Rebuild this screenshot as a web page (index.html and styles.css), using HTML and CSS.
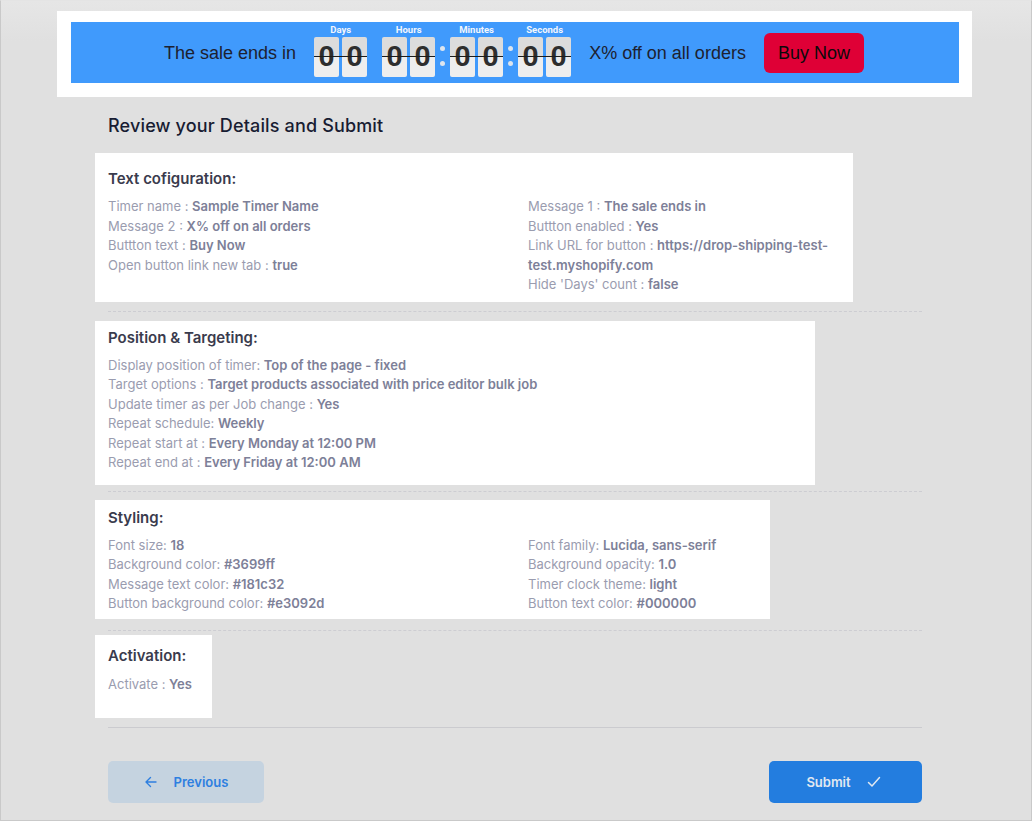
FILE: index.html
```html
<!DOCTYPE html>
<html lang="en">
<head>
<meta charset="utf-8">
<title>Review your Details and Submit</title>
<link rel="stylesheet" href="styles.css">
</head>
<body>
<div class="frame">
  <div class="banner">
    <div class="bar">
      <span class="bar-text">The sale ends in</span>
      <div class="timer">
        <div class="unit">
          <span class="unit-label">Days</span>
          <div class="digits"><span class="digit">0</span><span class="digit">0</span></div>
        </div>
        <span class="sep"></span>
        <div class="unit">
          <span class="unit-label">Hours</span>
          <div class="digits"><span class="digit">0</span><span class="digit">0</span></div>
        </div>
        <span class="sep colon"><i></i><i></i></span>
        <div class="unit">
          <span class="unit-label">Minutes</span>
          <div class="digits"><span class="digit">0</span><span class="digit">0</span></div>
        </div>
        <span class="sep colon"><i></i><i></i></span>
        <div class="unit">
          <span class="unit-label">Seconds</span>
          <div class="digits"><span class="digit">0</span><span class="digit">0</span></div>
        </div>
      </div>
      <span class="bar-text">X% off on all orders</span>
      <a class="buy" href="#">Buy Now</a>
    </div>
  </div>

  <main class="review">
    <h1 class="review-title">Review your Details and Submit</h1>

    <section class="card card-text">
      <h2 class="card-title">Text cofiguration:</h2>
      <div class="cols">
        <div class="col">
          <p>Timer name : <b>Sample Timer Name</b></p>
          <p>Message 2 : <b>X% off on all orders</b></p>
          <p>Buttton text : <b>Buy Now</b></p>
          <p>Open button link new tab : <b>true</b></p>
        </div>
        <div class="col">
          <p>Message 1 : <b>The sale ends in</b></p>
          <p>Buttton enabled : <b>Yes</b></p>
          <p>Link URL for button : <b>https://drop-shipping-test-test.myshopify.com</b></p>
          <p>Hide 'Days' count : <b>false</b></p>
        </div>
      </div>
    </section>
    <hr class="dash dash-first">

    <section class="card card-position">
      <h2 class="card-title">Position &amp; Targeting:</h2>
      <div class="col">
        <p>Display position of timer: <b>Top of the page - fixed</b></p>
        <p>Target options : <b>Target products associated with price editor bulk job</b></p>
        <p>Update timer as per Job change : <b>Yes</b></p>
        <p>Repeat schedule: <b>Weekly</b></p>
        <p>Repeat start at : <b>Every Monday at 12:00 PM</b></p>
        <p>Repeat end at : <b>Every Friday at 12:00 AM</b></p>
      </div>
    </section>
    <hr class="dash dash-second">

    <section class="card card-styling">
      <h2 class="card-title">Styling:</h2>
      <div class="cols">
        <div class="col">
          <p>Font size: <b>18</b></p>
          <p>Background color: <b>#3699ff</b></p>
          <p>Message text color: <b>#181c32</b></p>
          <p>Button background color: <b>#e3092d</b></p>
        </div>
        <div class="col">
          <p>Font family: <b>Lucida, sans-serif</b></p>
          <p>Background opacity: <b>1.0</b></p>
          <p>Timer clock theme: <b>light</b></p>
          <p>Button text color: <b>#000000</b></p>
        </div>
      </div>
    </section>
    <hr class="dash dash-last">

    <section class="card card-activation">
      <h2 class="card-title">Activation:</h2>
      <div class="col">
        <p>Activate : <b>Yes</b></p>
      </div>
    </section>
    <hr class="rule">

    <div class="actions">
      <button class="btn btn-prev" type="button">
        <svg width="14" height="14" viewBox="0 0 14 14" fill="none" stroke="currentColor" stroke-width="1.4" stroke-linecap="round" stroke-linejoin="round"><path d="M12 7H2.5M6.5 2.5 2 7l4.5 4.5"/></svg>
        <span>Previous</span>
      </button>
      <button class="btn btn-submit" type="button">
        <span>Submit</span>
        <svg width="14" height="12" viewBox="0 0 14 12" fill="none" stroke="currentColor" stroke-width="1.5" stroke-linecap="round" stroke-linejoin="round"><path d="M1.5 6.5 5 10 12.5 1.5"/></svg>
      </button>
    </div>
  </main>
</div>
</body>
</html>
```

FILE: styles.css
```css
* { box-sizing: border-box; }

html, body {
  margin: 0;
  padding: 0;
}

body {
  background: #e0e0e0;
  font-family: Inter, "Open Sans", sans-serif;
}

.frame {
  width: 1032px;
  height: 821px;
  border: 1px solid #c9c9c9;
  border-top-color: #e4e4e4;
  background: linear-gradient(#e6e6e6, #e0e0e0 40px);
  overflow: hidden;
}

/* ---- countdown bar preview ---- */
.banner {
  margin: 10px 0 0 56px;
  width: 915px;
  height: 86px;
  background: #fff;
  padding: 11px 13px 14px 14px;
}

.bar {
  height: 61px;
  background: #409afc;
  display: flex;
  align-items: center;
  justify-content: center;
  gap: 18px;
  padding-right: 2px;
}

.bar-text {
  font-family: "Liberation Sans", Arial, sans-serif;
  font-size: 18px;
  color: #1d2130;
  margin-top: 1px;
}

.timer {
  display: flex;
  align-items: flex-start;
  margin-top: -7px;
}

.unit {
  display: flex;
  flex-direction: column;
  align-items: center;
}

.unit-label {
  font-family: Roboto, "Liberation Sans", sans-serif;
  font-weight: 700;
  font-size: 9.5px;
  line-height: 11px;
  color: #f2f6fc;
  margin: 2px 0 2px;
}

.digits {
  position: relative;
  display: flex;
  gap: 3px;
}

.digits::after {
  content: "";
  position: absolute;
  left: 0;
  right: 0;
  top: 19px;
  height: 1px;
  background: #1c1c1c;
}

.digit {
  width: 25px;
  height: 40px;
  border-radius: 2px;
  background: linear-gradient(#dcdcdc 50%, #eeeeee 50%);
  font-family: Roboto, "Liberation Sans", sans-serif;
  font-weight: 700;
  font-size: 28px;
  line-height: 40px;
  text-align: center;
  color: #2e2e2e;
}

.sep {
  width: 15px;
  align-self: stretch;
}

.colon {
  display: flex;
  flex-direction: column;
  align-items: center;
  padding-top: 24px;
  gap: 10px;
}

.colon i {
  display: block;
  width: 5px;
  height: 5px;
  border-radius: 50%;
  background: #dde5ee;
}

.buy {
  display: block;
  height: 40px;
  padding: 0 14px 0 14px;
  border-radius: 6px;
  background: #df0036;
  color: #0a0a0a;
  font-family: "Liberation Sans", Arial, sans-serif;
  font-size: 18px;
  line-height: 40px;
  text-decoration: none;
  margin-top: 1px;
}

/* ---- review summary ---- */
.review {
  margin-left: 94px;
  width: 827px;
}

.review-title {
  margin: 15px 0 14px;
  padding-left: 13px;
  font-size: 18px;
  line-height: 27px;
  font-weight: 500;
  color: #181c32;
  letter-spacing: 0.15px;
}

.card {
  background: #fff;
  padding: 0 8px 0 13px;
}

.card-title {
  margin: 0 0 7px;
  font-size: 15px;
  line-height: 22px;
  font-weight: 600;
  color: #3a3b4d;
}

.cols {
  display: grid;
  grid-template-columns: 420px 1fr;
}

.col p {
  margin: 0;
  font-size: 13px;
  line-height: 19.5px;
  color: #9a9caf;
}

.col b {
  font-weight: 600;
  color: #7d8098;
}

.card-text {
  width: 758px;
  padding-top: 15px;
  padding-bottom: 7px;
}

.card-position {
  width: 720px;
  padding-top: 6px;
  padding-bottom: 12px;
}

.card-styling {
  width: 675px;
  padding-top: 7px;
  padding-bottom: 5px;
}

.card-activation {
  width: 117px;
  padding-top: 10px;
  padding-bottom: 24px;
}

.card-activation .card-title {
  margin-bottom: 8px;
}

.dash {
  margin: 6px 0 8px 13px;
  border: 0;
  border-top: 1px dashed #cdcdd2;
  height: 0;
}

.dash-first {
  margin-top: 9px;
  margin-bottom: 9px;
}

.dash-second {
  margin-top: 6px;
  margin-bottom: 8px;
}

.dash-last {
  margin-top: 11px;
  margin-bottom: 4px;
}

.rule {
  margin: 9px 0 0 13px;
  border: 0;
  border-top: 1px solid #cbcbcf;
  height: 0;
}

.actions {
  display: flex;
  justify-content: space-between;
  margin: 33px 0 0 13px;
  width: 814px;
}

.btn {
  height: 42px;
  border: 0;
  border-radius: 5px;
  display: flex;
  align-items: center;
  justify-content: center;
  gap: 16px;
  font-family: Inter, "Open Sans", sans-serif;
  font-size: 13px;
  font-weight: 600;
  cursor: pointer;
}

.btn-prev {
  width: 156px;
  background: #c5d3e0;
  color: #2e7fe0;
  padding-right: 6px;
}

.btn-submit {
  width: 153px;
  background: #237ddf;
  color: #e0e8f1;
  gap: 16px;
  padding-left: 2px;
}
```
